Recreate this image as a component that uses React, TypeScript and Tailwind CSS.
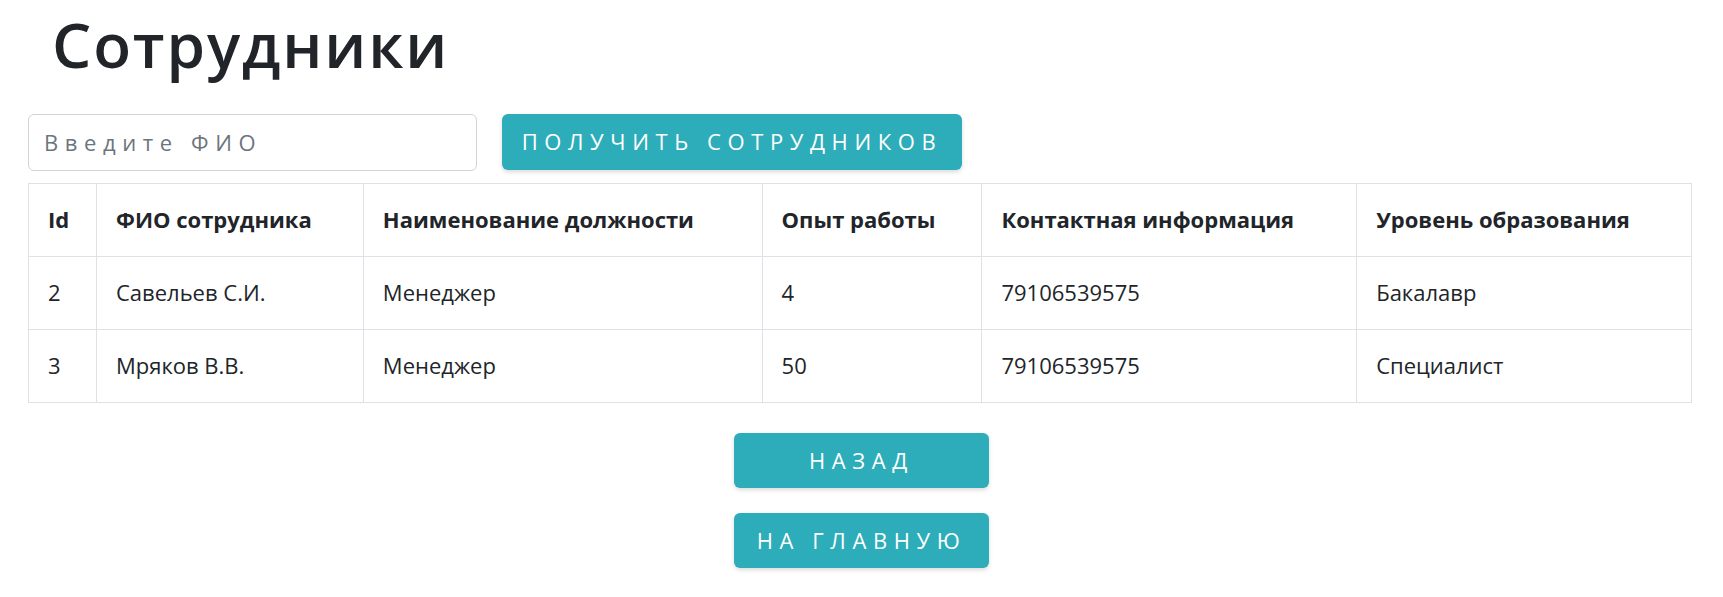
import React, { useState } from 'react';

const rows = [
  { id: 2, name: 'Савельев С.И.', position: 'Менеджер', exp: '4', contact: '79106539575', edu: 'Бакалавр' },
  { id: 3, name: 'Мряков В.В.', position: 'Менеджер', exp: '50', contact: '79106539575', edu: 'Специалист' },
];

const headers = [
  { title: 'Id', w: 'w-[68px]' },
  { title: 'ФИО сотрудника', w: 'w-[267px]' },
  { title: 'Наименование должности', w: 'w-[399px]' },
  { title: 'Опыт работы', w: 'w-[220px]' },
  { title: 'Контактная информация', w: 'w-[375px]' },
  { title: 'Уровень образования', w: 'w-[335px]' },
];

export default function App() {
  const [fio, setFio] = useState('');

  return (
    <div className="min-h-screen bg-white text-[#212529] font-['Open_Sans',sans-serif]">
      <div className="px-[28px] pt-[6px]">
        <h1 className="pl-[24px] text-[62px] leading-[1.24] tracking-[0.03em] font-semibold">Сотрудники</h1>

        <div className="mt-[31px] flex gap-[25px]">
          <input
            type="text"
            placeholder="Введите ФИО"
            value={fio}
            onChange={e => setFio(e.target.value)}
            className="w-[449px] h-[57px] px-[15px] border border-[#ced4da] rounded-[6px] text-[22px] tracking-[0.3em] placeholder:text-[#6c757d] outline-none"
          />
          <button className="h-[56px] w-[460px] rounded-[6px] bg-[#2cadb9] text-white text-[22px] tracking-[0.3em] shadow-[0_2px_4px_rgba(0,0,0,0.15)]">
            ПОЛУЧИТЬ СОТРУДНИКОВ
          </button>
        </div>

        <table className="mt-[12px] w-[1664px] border-collapse text-[22px]">
          <thead>
            <tr className="h-[73px]">
              {headers.map(h => (
                <th key={h.title} className={`${h.w} border border-[#dee2e6] px-[19px] text-left font-bold`}>
                  {h.title}
                </th>
              ))}
            </tr>
          </thead>
          <tbody>
            {rows.map(r => (
              <tr key={r.id} className="h-[73px]">
                <td className="border border-[#dee2e6] px-[19px]">{r.id}</td>
                <td className="border border-[#dee2e6] px-[19px]">{r.name}</td>
                <td className="border border-[#dee2e6] px-[19px]">{r.position}</td>
                <td className="border border-[#dee2e6] px-[19px]">{r.exp}</td>
                <td className="border border-[#dee2e6] px-[19px]">{r.contact}</td>
                <td className="border border-[#dee2e6] px-[19px]">{r.edu}</td>
              </tr>
            ))}
          </tbody>
        </table>

        <div className="mt-[30px] flex flex-col items-center gap-[25px]">
          <button className="h-[55px] w-[255px] rounded-[6px] bg-[#2cadb9] text-white text-[22px] tracking-[0.3em] shadow-[0_2px_4px_rgba(0,0,0,0.15)]">
            НАЗАД
          </button>
          <button className="h-[55px] w-[255px] rounded-[6px] bg-[#2cadb9] text-white text-[22px] tracking-[0.3em] shadow-[0_2px_4px_rgba(0,0,0,0.15)]">
            НА ГЛАВНУЮ
          </button>
        </div>
      </div>
    </div>
  );
}
